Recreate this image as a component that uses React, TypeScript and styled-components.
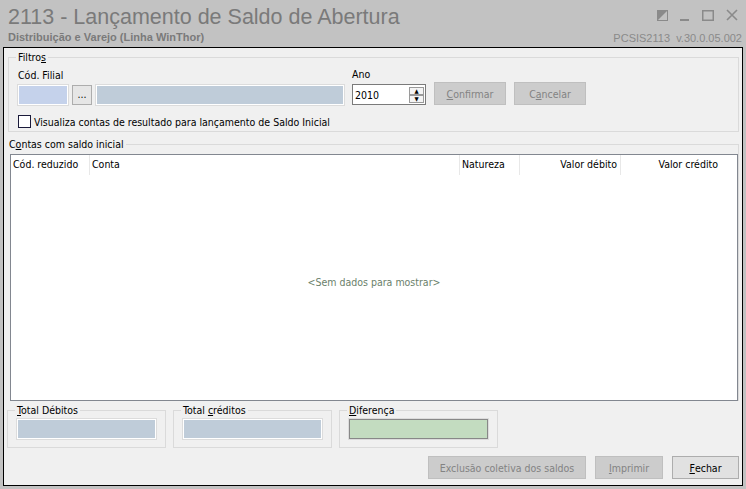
import React from 'react';
import styled, { createGlobalStyle } from 'styled-components';

const Global = createGlobalStyle`
  html, body { margin: 0; padding: 0; background: #c2c2c2; }
  body { font-family: "DejaVu Sans Condensed", "Liberation Sans", sans-serif; font-size: 10.5px; color: #000; }
  * { box-sizing: border-box; }
`;

const Window = styled.div`
  width: 746px;
  height: 489px;
  background: #c2c2c2;
  display: flex;
  flex-direction: column;
`;

const TitleBar = styled.div`
  height: 47px;
  display: flex;
  justify-content: space-between;
  padding: 3px 8px 0 8px;
`;

const Titles = styled.div`
  display: flex;
  flex-direction: column;
`;

const Title = styled.div`
  font-family: "Liberation Sans", Arial, sans-serif;
  font-size: 21.5px;
  color: #7a7a7a;
  line-height: 28px;
`;

const Subtitle = styled.div`
  font-family: "Liberation Sans", Arial, sans-serif;
  font-weight: bold;
  font-size: 11px;
  color: #7a7a7a;
`;

const Right = styled.div`
  display: flex;
  flex-direction: column;
  align-items: flex-end;
`;

const WinButtons = styled.div`
  display: flex;
  gap: 12px;
  align-items: center;
  height: 20px;
  margin-top: 2px;
  color: #8a8a8a;
`;

const Version = styled.div`
  font-family: "Liberation Sans", Arial, sans-serif;
  font-size: 11px;
  color: #8a8a8a;
  margin-top: 7px;
  margin-right: -4px;
`;

const Body = styled.div`
  flex: 1;
  margin: 0 3px 3px 3px;
  border: 1px solid #000;
  background: #f0f0f0;
  padding: 3px 3px 0 4px;
  display: flex;
  flex-direction: column;
`;

const Group = styled.fieldset<{ $w?: number }>`
  border: 1px solid #dadada;
  margin: 0;
  padding: 0 9px 0 9px;
  ${p => (p.$w ? `width: ${p.$w}px;` : '')}
  legend {
    padding: 0 2px;
    margin-left: -2px;
    line-height: 13px;
  }
`;

const FilterGroup = styled(Group)`
  padding-top: 4px;
`;

const FilterRow = styled.div`
  display: flex;
  align-items: flex-end;
  gap: 8px;
`;

const Field = styled.div`
  display: flex;
  flex-direction: column;
  gap: 4px;
`;

const Inline = styled.div`
  display: flex;
  gap: 4px;
`;

const Input = styled.div<{ $w: number; $bg: string; $border?: string }>`
  width: ${p => p.$w}px;
  height: 20px;
  background: ${p => p.$bg};
  border: 1px solid ${p => p.$border || '#fff'};
  outline: 1px solid #dcdcdc;
`;

const DotsButton = styled.div`
  width: 20px;
  height: 20px;
  border: 1px solid #adadad;
  background: #e6e6e6;
  text-align: center;
  line-height: 16px;
`;

const Spin = styled.div`
  width: 74px;
  height: 21px;
  border: 1px solid #7a7a7a;
  background: #fff;
  display: flex;
  align-items: center;
  justify-content: space-between;
  padding-left: 2px;
`;

const SpinArrows = styled.div`
  display: flex;
  flex-direction: column;
  margin-right: 1px;
  div {
    width: 15px;
    height: 8px;
    border: 1px solid #9a9a9a;
    background: #f4f4f4;
    font-size: 6px;
    line-height: 6px;
    text-align: center;
  }
`;

const Btn = styled.div<{ $w: number; $enabled?: boolean }>`
  width: ${p => p.$w}px;
  height: 23px;
  display: flex;
  align-items: center;
  justify-content: center;
  background: ${p => (p.$enabled ? '#e1e1e1' : '#cccccc')};
  border: 1px solid ${p => (p.$enabled ? '#adadad' : '#bfbfbf')};
  color: ${p => (p.$enabled ? '#000' : '#838383')};
  u { text-decoration: underline; }
`;

const CheckRow = styled.label`
  display: flex;
  align-items: center;
  gap: 3px;
  margin: 10px 0 3px 0;
`;

const Box = styled.span`
  width: 13px;
  height: 13px;
  border: 1px solid #1a1a3a;
  background: #fff;
`;

const GridGroup = styled(Group)`
  margin-top: 6px;
  padding: 0 0 0 1px;
  border-left: none;
  border-bottom: none;
  display: flex;
`;

const Grid = styled.div`
  flex: 1;
  margin-left: 1px;
  margin-top: 3px;
  border: 1px solid #828790;
  background: #fff;
  display: flex;
  flex-direction: column;
  height: 247px;
`;

const Header = styled.div`
  display: grid;
  grid-template-columns: 79px 370px 60px 101px 100px;
  height: 20px;
`;

const HCell = styled.div<{ $right?: boolean; $border?: boolean }>`
  padding: 0 3px 0 2px;
  line-height: 18px;
  text-align: ${p => (p.$right ? 'right' : 'left')};
  border-right: ${p => (p.$border === false ? 'none' : '1px solid #e8e8e8')};
`;

const Empty = styled.div`
  flex: 1;
  display: flex;
  align-items: center;
  justify-content: center;
  color: #6b7f6b;
  padding-bottom: 12px;
`;

const Totals = styled.div`
  display: flex;
  gap: 7px;
  margin-top: 3px;
  margin-left: -1px;
`;

const TotalGroup = styled(Group)`
  height: 44px;
  padding-top: 2px;
`;

const Footer = styled.div`
  display: flex;
  justify-content: flex-end;
  gap: 9px;
  margin-top: 8px;
`;

const App = (): JSX.Element => {
  return (
    <Window>
      <Global />
      <TitleBar>
        <Titles>
          <Title>2113 - Lançamento de Saldo de Abertura</Title>
          <Subtitle>Distribuição e Varejo (Linha WinThor)</Subtitle>
        </Titles>
        <Right>
          <WinButtons>
            <svg width="11" height="11" viewBox="0 0 11 11"><rect x="0.5" y="0.5" width="10" height="10" fill="none" stroke="#8a8a8a" /><polygon points="0,11 11,0 0,0" fill="#8a8a8a" /></svg>
            <svg width="10" height="11" viewBox="0 0 10 11"><rect x="0" y="9" width="9" height="2" fill="#8a8a8a" /></svg>
            <svg width="12" height="11" viewBox="0 0 12 11"><rect x="0.75" y="0.75" width="10.5" height="9.5" fill="none" stroke="#8a8a8a" strokeWidth="1.5" /></svg>
            <svg width="12" height="12" viewBox="0 0 12 12"><path d="M1 1 L11 11 M11 1 L1 11" stroke="#8a8a8a" strokeWidth="1.6" /></svg>
          </WinButtons>
          <Version>PCSIS2113 &nbsp;v.30.0.05.002</Version>
        </Right>
      </TitleBar>
      <Body>
        <FilterGroup>
          <legend>Filtro<u>s</u></legend>
          <FilterRow>
            <Field>
              <span>Cód. Filial</span>
              <Inline>
                <Input $w={50} $bg="#c5d2eb" />
                <DotsButton>...</DotsButton>
                <Input $w={248} $bg="#bfccd9" />
              </Inline>
            </Field>
            <Field>
              <span>Ano</span>
              <Spin>
                <span>2010</span>
                <SpinArrows>
                  <div>▲</div>
                  <div>▼</div>
                </SpinArrows>
              </Spin>
            </Field>
            <Btn $w={72}><u>C</u>onfirmar</Btn>
            <Btn $w={72}>C<u>a</u>ncelar</Btn>
          </FilterRow>
          <CheckRow>
            <Box />
            <span>Visualiza contas de resultado para lançamento de Saldo Inicial</span>
          </CheckRow>
        </FilterGroup>
        <GridGroup>
          <legend>C<u>o</u>ntas com saldo inicial</legend>
          <Grid>
            <Header>
              <HCell>Cód. reduzido</HCell>
              <HCell>Conta</HCell>
              <HCell>Natureza</HCell>
              <HCell $right>Valor débito</HCell>
              <HCell $right $border={false}>Valor crédito</HCell>
            </Header>
            <Empty>&lt;Sem dados para mostrar&gt;</Empty>
          </Grid>
        </GridGroup>
        <Totals>
          <TotalGroup $w={159}>
            <legend><u>T</u>otal Débitos</legend>
            <Input $w={139} $bg="#bfccd9" />
          </TotalGroup>
          <TotalGroup $w={159}>
            <legend>Total <u>c</u>réditos</legend>
            <Input $w={139} $bg="#bfccd9" />
          </TotalGroup>
          <TotalGroup $w={159}>
            <legend><u>D</u>iferença</legend>
            <Input $w={139} $bg="#c3dcc0" $border="#888" />
          </TotalGroup>
        </Totals>
        <Footer>
          <Btn $w={158}>Exclusão coletiva dos saldos</Btn>
          <Btn $w={68}><u>I</u>mprimir</Btn>
          <Btn $w={67} $enabled><u>F</u>echar</Btn>
        </Footer>
      </Body>
    </Window>
  );
};

export default App;
